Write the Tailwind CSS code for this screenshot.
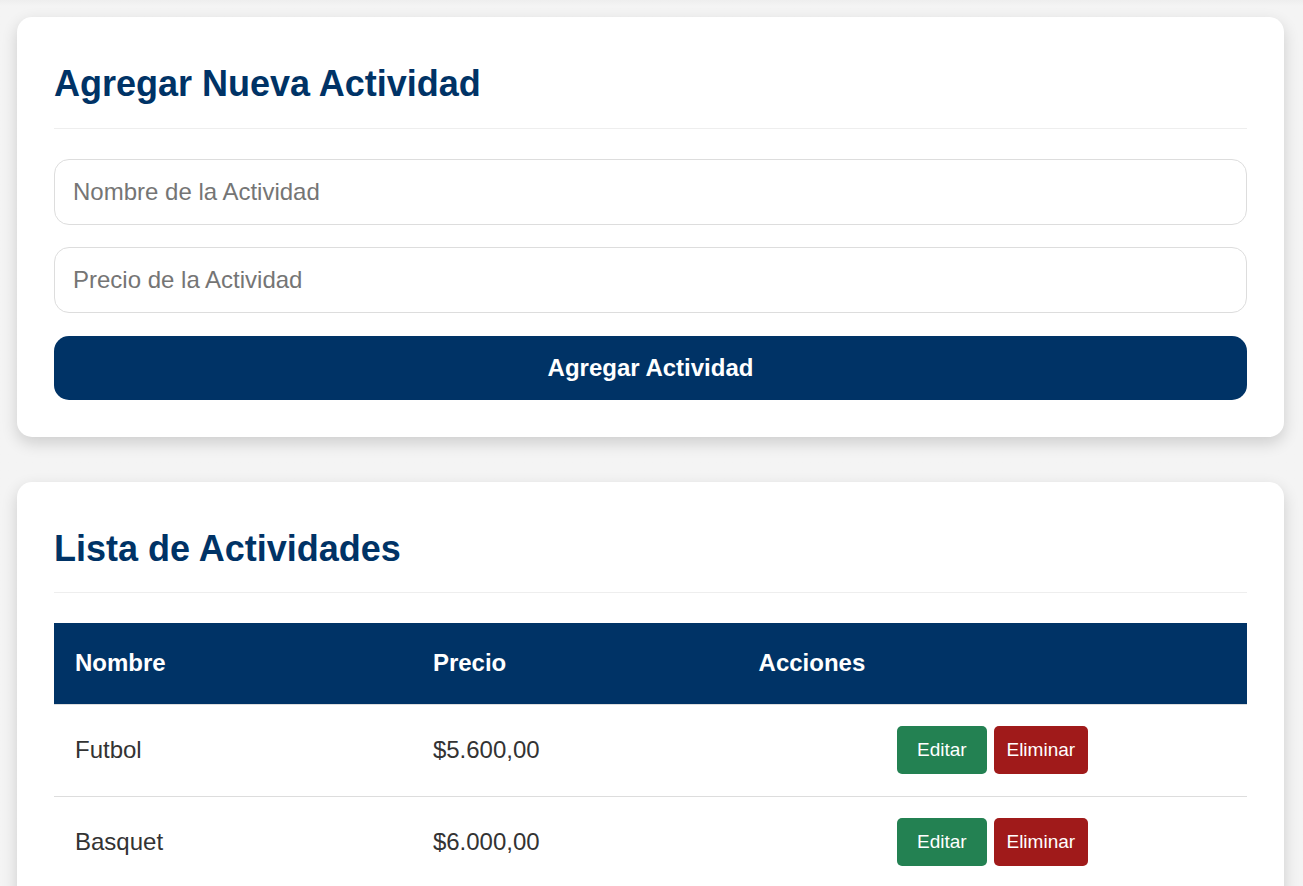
<!DOCTYPE html>
<html lang="es">
<head>
<meta charset="utf-8">
<meta name="viewport" content="width=device-width, initial-scale=1">
<title>Actividades</title>
<script src="https://cdn.jsdelivr.net/npm/@tailwindcss/browser@4"></script>
</head>
<body class="bg-[#f4f4f4] font-['Liberation_Sans',Arial,sans-serif] text-2xl text-[#333]">
<main class="flex flex-col gap-[45px] bg-linear-to-b from-[#eeeeee] to-[#f4f4f4] to-[6px] pt-[17px] pr-[19px] pb-[45px] pl-[17px]">
  <section class="rounded-[15px] bg-white p-[37px] shadow-[0_6px_16px_rgba(0,0,0,0.16)]">
    <h2 class="mb-[30px] border-b border-[#eee] pt-2 pb-[22px] text-4xl leading-[44px] font-bold text-[#003366]">Agregar Nueva Actividad</h2>
    <form>
      <div class="mb-[23px] flex flex-col gap-[22px]">
        <input type="text" aria-label="Nombre de la Actividad" placeholder="Nombre de la Actividad" class="h-[66px] w-full rounded-[15px] border border-[#ddd] bg-white px-[18px] placeholder:text-[#757575]">
        <input type="text" aria-label="Precio de la Actividad" placeholder="Precio de la Actividad" class="h-[66px] w-full rounded-[15px] border border-[#ddd] bg-white px-[18px] placeholder:text-[#757575]">
      </div>
      <button type="button" class="block h-16 w-full rounded-[15px] bg-[#003366] font-bold text-white">Agregar Actividad</button>
    </form>
  </section>
  <section class="rounded-[15px] bg-white p-[37px] shadow-[0_6px_16px_rgba(0,0,0,0.16)]">
    <h2 class="mb-[30px] border-b border-[#eee] pt-2 pb-[21px] text-4xl leading-[44px] font-bold text-[#003366]">Lista de Actividades</h2>
    <table class="w-full table-fixed border-collapse text-left">
      <colgroup><col class="w-[30%]"><col class="w-[27.3%]"><col></colgroup>
      <thead class="bg-[#003366] text-white">
        <tr class="h-[81px] border-b border-[#ddd]"><th scope="col" class="px-[21px]">Nombre</th><th scope="col" class="px-[21px]">Precio</th><th scope="col" class="px-[21px]">Acciones</th></tr>
      </thead>
      <tbody>
        <tr class="h-[92px] border-b border-[#ddd]"><td class="px-[21px]">Futbol</td><td class="px-[21px]">$5.600,00</td>
          <td class="px-[21px]"><div class="flex justify-center gap-[7px]"><button type="button" class="h-12 w-[90px] rounded-[5px] bg-[#238152] text-[19px] text-white">Editar</button><button type="button" class="h-12 w-[94px] rounded-[5px] bg-[#a01a1a] text-[19px] text-white">Eliminar</button></div></td></tr>
        <tr class="h-[92px] border-b border-[#ddd]"><td class="px-[21px]">Basquet</td><td class="px-[21px]">$6.000,00</td>
          <td class="px-[21px]"><div class="flex justify-center gap-[7px]"><button type="button" class="h-12 w-[90px] rounded-[5px] bg-[#238152] text-[19px] text-white">Editar</button><button type="button" class="h-12 w-[94px] rounded-[5px] bg-[#a01a1a] text-[19px] text-white">Eliminar</button></div></td></tr>
      </tbody>
    </table>
  </section>
</main>
</body>
</html>
